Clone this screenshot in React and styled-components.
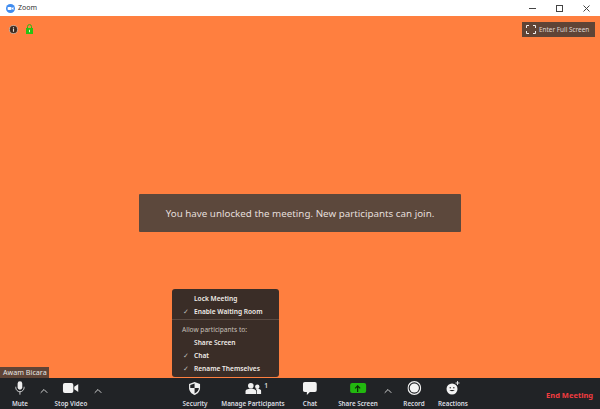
import React from 'react';
import styled, { createGlobalStyle } from 'styled-components';
import { ChevronUp } from 'lucide-react';

const Global = createGlobalStyle`
  html, body { margin: 0; padding: 0; background: #fff; }
  #root { width: 600px; height: 409px; overflow: hidden; }
  * { box-sizing: border-box; }
`;

const Windows = styled.div`
  width: 600px; height: 409px; display: flex; flex-direction: column;
  font-family: "Noto Sans", "Open Sans", sans-serif;
`;
const TitleBar = styled.div`
  height: 16px; flex: none; display: flex; align-items: center; background: #fff; padding-left: 6px;
`;
const TitleText = styled.span`
  margin-left: 3px; font-size: 7px; color: #333; line-height: 16px;
`;
const WinButtons = styled.div`
  margin-left: auto; display: flex; height: 14px; align-items: center; gap: 20px; padding-right: 10px;
`;
const Stage = styled.div`
  flex: 1; position: relative; background: #ff7f3f; display: flex; align-items: center; justify-content: center;
`;
const StatusIcons = styled.div`
  position: absolute; left: 9px; top: 8px; display: flex; gap: 8px; align-items: center;
`;
const FullScreen = styled.div`
  position: absolute; right: 5px; top: 6px; width: 73px; height: 15px; background: #5f4436;
  display: flex; align-items: center; gap: 3px; padding-left: 4px;
  font-size: 6.4px; color: #dfd8d3; white-space: nowrap;
`;
const Toast = styled.div`
  width: 322px; height: 38px; margin-top: 32px; background: #5c483c; border-radius: 1px;
  display: flex; align-items: center; justify-content: center;
  font-size: 9.8px; color: #e4dfdb; white-space: nowrap;
`;
const Menu = styled.div`
  position: absolute; left: 172px; top: 273px; width: 107px; height: 88px; background: #3a2d27;
  border-radius: 3px; padding: 3px 0; color: #f0ece8; font-size: 6.6px; font-weight: 600;
`;
const MenuRow = styled.div`
  height: 13px; display: flex; align-items: center; padding-left: 22px; position: relative; white-space: nowrap;
  ${p => p.$checked && `
    &::before { content: "✓"; position: absolute; left: 11px; font-size: 7px; font-weight: 400; color: #bbb; }
  `}
`;
const MenuDivider = styled.div`
  height: 1px; background: #5a4b43; margin: 1px 0 3px;
`;
const MenuHint = styled.div`
  height: 13px; display: flex; align-items: center; padding-left: 10px; font-weight: 400; color: #c8c0ba; font-size: 6.6px;
`;
const NameTag = styled.div`
  position: absolute; left: 0; bottom: 0; height: 11px; width: 49px; background: #5f4436;
  color: #e4e4e4; font-size: 7.2px; line-height: 11px; padding-left: 3px; white-space: nowrap;
`;
const Toolbar = styled.div`
  height: 31px; flex: none; background: #212326; position: relative; display: flex;
  color: #dcdee2; font-size: 6.3px; font-weight: 600;
`;
const Tool = styled.div`
  position: absolute; top: 0; left: ${p => p.$x}px; transform: translateX(-50%);
  height: 31px; display: flex; flex-direction: column; align-items: center; white-space: nowrap;
`;
const IconSlot = styled.div`
  height: 20px; display: flex; align-items: center; justify-content: center; position: relative;
`;
const Label = styled.span`
  line-height: 9px; margin-top: 1px;
`;
const Chevron = styled.div`
  position: absolute; left: ${p => p.$x}px; top: 7px; display: flex; color: #e4e4e4;
`;
const Count = styled.span`
  position: absolute; top: 3px; right: -7px; font-size: 6.5px; font-weight: 600; color: #ddd;
`;
const EndMeeting = styled.div`
  position: absolute; right: 7px; top: 12px; font-size: 7.5px; font-weight: 700; color: #f23c40; white-space: nowrap;
`;
const ShareBox = styled.div`
  width: 16px; height: 10px; border-radius: 2px; background: #22b80f; display: flex; align-items: center; justify-content: center;
`;

const Logo = () => (
  <svg width="9" height="9" viewBox="0 0 11 11">
    <circle cx="5.5" cy="5.5" r="5.5" fill="#3f8cf0" />
    <rect x="2" y="3.6" width="4.8" height="3.8" rx="1" fill="#fff" />
    <path d="M7.2 5l2-1.3v3.600l-2-1.300z" fill="#fff" />
  </svg>
);

export default function App() {
  return (
    <Windows>
      <Global />
      <TitleBar>
        <Logo />
        <TitleText>Zoom</TitleText>
        <WinButtons>
          <svg width="7" height="7" viewBox="0 0 7 7"><path d="M0 3.5h7" stroke="#444" strokeWidth="1" /></svg>
          <svg width="7" height="7" viewBox="0 0 7 7"><rect x=".5" y=".5" width="6" height="6" fill="none" stroke="#444" /></svg>
          <svg width="7" height="7" viewBox="0 0 7 7"><path d="M.5.5l6 6M6.5.5l-6 6" stroke="#444" /></svg>
        </WinButtons>
      </TitleBar>
      <Stage>
        <StatusIcons>
          <svg width="9" height="9" viewBox="0 0 8 8">
            <circle cx="4" cy="4" r="3.6" fill="#3d2a20" stroke="#c9b3a6" strokeWidth=".8" />
            <rect x="3.5" y="3.4" width="1" height="2.6" fill="#e6d9d0" />
            <rect x="3.5" y="2" width="1" height="1" fill="#e6d9d0" />
          </svg>
          <svg width="7" height="10" viewBox="0 0 7 10">
            <path d="M1.500 4V2.600a2 2 0 0 1 4 0V4" fill="none" stroke="#28b812" />
            <rect x="0" y="4" width="7" height="6" fill="#28c214" />
            <rect x="3" y="5.800" width="1" height="2.400" fill="#e6f5c0" />
          </svg>
        </StatusIcons>
        <FullScreen>
          <svg width="10" height="9" viewBox="0 0 10 9" fill="none" stroke="#eee" strokeWidth="1">
            <path d="M.5 3V.5H3M7 .5h2.500V3M9.500 6v2.500H7M3 8.500H.5V6" />
          </svg>
          Enter Full Screen
        </FullScreen>
        <Toast>You have unlocked the meeting. New participants can join.</Toast>
        <Menu>
          <MenuRow>Lock Meeting</MenuRow>
          <MenuRow $checked>Enable Waiting Room</MenuRow>
          <MenuDivider />
          <MenuHint>Allow participants to:</MenuHint>
          <MenuRow>Share Screen</MenuRow>
          <MenuRow $checked>Chat</MenuRow>
          <MenuRow $checked>Rename Themselves</MenuRow>
        </Menu>
        <NameTag>Awam Bicara</NameTag>
      </Stage>
      <Toolbar>
        <Tool $x={20}>
          <IconSlot>
            <svg width="10" height="14" viewBox="0 0 12 16">
              <rect x="3.200" y="0" width="5.600" height="10" rx="2.800" fill="#eee" />
              <path d="M1 6.500v1a5 5 0 0 0 10 0v-1" fill="none" stroke="#eee" />
              <path d="M6 12.500V16" stroke="#eee" />
            </svg>
          </IconSlot>
          <Label>Mute</Label>
        </Tool>
        <Chevron $x={38}><ChevronUp size={12} strokeWidth={1.8} /></Chevron>
        <Tool $x={71}>
          <IconSlot>
            <svg width="16" height="10" viewBox="0 0 17 11">
              <rect x="0" y="0" width="11.500" height="11" rx="2.200" fill="#f2f2f2" />
              <path d="M12.500 4.200L17 1v9l-4.500-3.200z" fill="#f2f2f2" />
            </svg>
          </IconSlot>
          <Label>Stop Video</Label>
        </Tool>
        <Chevron $x={92}><ChevronUp size={12} strokeWidth={1.8} /></Chevron>
        <Tool $x={195}>
          <IconSlot>
            <svg width="12" height="13" viewBox="0 0 12 13">
              <path d="M6 0l5.500 2v4c0 3.300-2.400 5.800-5.500 7C2.900 11.800.5 9.300.5 6V2z" fill="#f0f0f0" />
              <path d="M6 1.500V6H1.700V2.900zM6 6h4.300c0 2.500-1.800 4.300-4.300 5.400z" fill="#232427" />
            </svg>
          </IconSlot>
          <Label>Security</Label>
        </Tool>
        <Tool $x={253}>
          <IconSlot>
            <svg width="16" height="11" viewBox="0 0 16 11" fill="#f0f0f0">
              <circle cx="5.500" cy="2.800" r="2.800" />
              <path d="M0 11V8.600C0 6.800 2 5.800 5.500 5.800S11 6.800 11 8.600V11z" />
              <circle cx="12" cy="3.800" r="2.200" />
              <path d="M11.700 11V8.300c0-1-.4-1.700-1.200-2.200.5-.2 1-.3 1.700-.3C14.500 5.800 16 6.800 16 8.300V11z" />
            </svg>
            <Count>1</Count>
          </IconSlot>
          <Label>Manage Participants</Label>
        </Tool>
        <Tool $x={310}>
          <IconSlot>
            <svg width="14" height="13" viewBox="0 0 14 13">
              <path d="M2 0h10a2 2 0 0 1 2 2v6a2 2 0 0 1-2 2H7l-3 3v-3H2a2 2 0 0 1-2-2V2a2 2 0 0 1 2-2z" fill="#f2f2f2" />
            </svg>
          </IconSlot>
          <Label>Chat</Label>
        </Tool>
        <Tool $x={358}>
          <IconSlot>
            <ShareBox>
              <svg width="7" height="7" viewBox="0 0 7 7" fill="none" stroke="#0c2a08" strokeWidth="1.200">
                <path d="M3.500 7V1M1 3.300l2.500-2.500L6 3.300" />
              </svg>
            </ShareBox>
          </IconSlot>
          <Label>Share Screen</Label>
        </Tool>
        <Chevron $x={382}><ChevronUp size={12} strokeWidth={1.8} /></Chevron>
        <Tool $x={414}>
          <IconSlot>
            <svg width="14" height="14" viewBox="0 0 14 14">
              <circle cx="7" cy="7" r="6.300" fill="none" stroke="#eee" strokeWidth="1.200" />
              <circle cx="7" cy="7" r="4.600" fill="#f4f4f4" />
            </svg>
          </IconSlot>
          <Label>Record</Label>
        </Tool>
        <Tool $x={453}>
          <IconSlot>
            <svg width="14" height="14" viewBox="0 0 14 14">
              <circle cx="6" cy="8" r="5.500" fill="#f2f2f2" />
              <circle cx="4.200" cy="6.800" r=".7" fill="#222" />
              <circle cx="7.800" cy="6.800" r=".7" fill="#222" />
              <path d="M3.500 9c.6 1.500 4.400 1.500 5 0z" fill="#222" />
              <path d="M11.500 0v4M9.500 2h4" stroke="#eee" strokeWidth=".9" />
            </svg>
          </IconSlot>
          <Label>Reactions</Label>
        </Tool>
        <EndMeeting>End Meeting</EndMeeting>
      </Toolbar>
    </Windows>
  );
}
